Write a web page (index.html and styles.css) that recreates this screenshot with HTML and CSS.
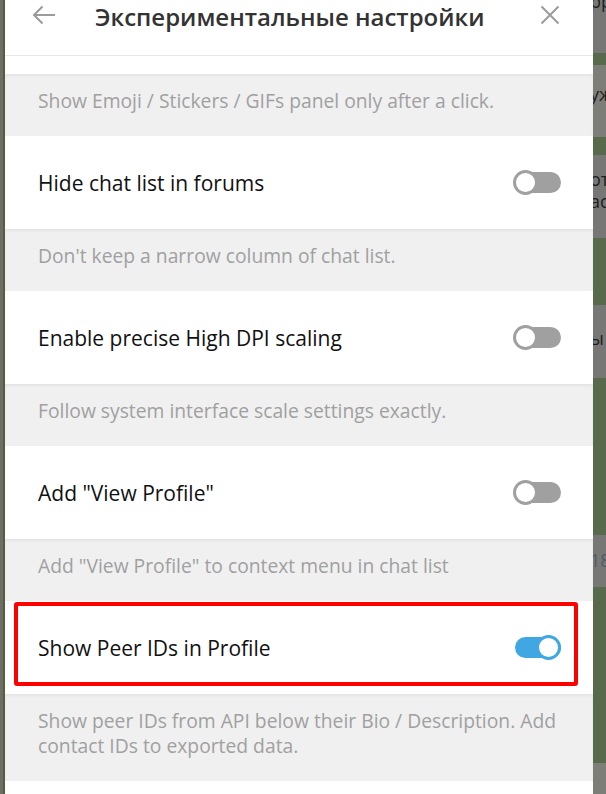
FILE: index.html
```html
<!DOCTYPE html>
<html lang="ru">
<head>
    <meta charset="UTF-8">
    <meta name="viewport" content="width=device-width, initial-scale=1.0">
    <title>Экспериментальные настройки</title>
    <link rel="stylesheet" href="styles.css">
</head>
<body>
    <div class="screen">
        <div class="edge-left"></div>

        <div class="panel">
            <header class="panel-head">
                <svg class="icon-back" width="24" height="20" viewBox="0 0 24 20">
                    <path d="M23 10H2M10.5 1.5L2 10l8.5 8.5" fill="none" stroke="#9b9b9b" stroke-width="2"/>
                </svg>
                <h1 class="title">Экспериментальные настройки</h1>
                <svg class="icon-close" width="20" height="20" viewBox="0 0 20 20">
                    <path d="M1.5 1.5l17 17M18.5 1.5l-17 17" fill="none" stroke="#9b9b9b" stroke-width="2"/>
                </svg>
            </header>
            <div class="spacer"></div>

            <p class="about">Show Emoji / Stickers / GIFs panel only after a click.</p>

            <div class="option">
                <span class="label">Hide chat list in forums</span>
                <span class="toggle"></span>
            </div>
            <p class="about">Don't keep a narrow column of chat list.</p>

            <div class="option">
                <span class="label">Enable precise High DPI scaling</span>
                <span class="toggle"></span>
            </div>
            <p class="about">Follow system interface scale settings exactly.</p>

            <div class="option">
                <span class="label">Add "View Profile"</span>
                <span class="toggle"></span>
            </div>
            <p class="about">Add "View Profile" to context menu in chat list</p>

            <div class="option marked">
                <span class="label">Show Peer IDs in Profile</span>
                <span class="toggle on"></span>
            </div>
            <p class="about">Show peer IDs from API below their Bio / Description. Add contact IDs to exported data.</p>

            <div class="option"></div>
        </div>

        <div class="edge-right">
            <div class="stripe dim" style="height: 53px"><span class="peek top">рр</span></div>
            <div class="stripe" style="height: 12px"></div>
            <div class="stripe dim light" style="height: 72px"><span class="peek" style="padding-top: 18px">уж</span></div>
            <div class="stripe" style="height: 18px"></div>
            <div class="stripe dim" style="height: 83px"><span class="peek" style="padding-top: 13px">от<br>ас</span></div>
            <div class="stripe" style="height: 67px"></div>
            <div class="stripe dim" style="height: 73px"><span class="peek" style="padding-top: 22px">ы</span></div>
            <div class="stripe" style="height: 157px"></div>
            <div class="stripe dim" style="height: 52px"><span class="peek num" style="padding-top: 14px">18</span></div>
            <div class="stripe" style="height: 176px"></div>
            <div class="stripe dim light" style="height: 31px"></div>
        </div>
    </div>
</body>
</html>
```

FILE: styles.css
```css
body {
    margin: 0;
    padding: 0;
    font-family: 'Open Sans', 'Noto Sans', sans-serif;
    background-color: #6d6e69;
    overflow: hidden;
}
.screen {
    display: flex;
    height: 794px;
}
.edge-left {
    width: 3px;
    border-right: 2px solid #565e35;
    background-color: #6d6e69;
}
.panel {
    width: 588px;
    background-color: #ffffff;
    overflow: hidden;
}
.panel-head {
    display: flex;
    align-items: center;
    height: 27px;
    padding: 3px 33px 25px 27px;
    border-bottom: 1px solid #e8e8e8;
}
.icon-back,
.icon-close {
    margin-top: -3px;
}
.title {
    flex: 1;
    margin: 0 0 0 39px;
    font-size: 24px;
    line-height: 27px;
    font-weight: 600;
    color: #333333;
}
.spacer {
    height: 18px;
}
.about {
    margin: 0;
    padding: 14px 20px 23px 33px;
    min-height: 25px;
    background-color: #f0f0f0;
    box-shadow: inset 0 2px 3px rgba(0, 0, 0, 0.05);
    color: #a0a0a0;
    font-size: 19.3px;
    line-height: 25px;
}
.option {
    position: relative;
    display: flex;
    align-items: center;
    justify-content: space-between;
    height: 93px;
    padding: 0 32px 0 33px;
    font-size: 21px;
    color: #111111;
}
.label {
    padding-top: 1px;
}
.toggle {
    position: relative;
    width: 48px;
    height: 25px;
}
.toggle::before {
    content: "";
    position: absolute;
    left: 2px;
    right: 0;
    top: 2px;
    height: 21px;
    border-radius: 11px;
    background-color: #a0a0a0;
}
.toggle::after {
    content: "";
    position: absolute;
    left: 0;
    top: 0;
    width: 19px;
    height: 19px;
    border: 3px solid #a0a0a0;
    border-radius: 50%;
    background-color: #ffffff;
}
.toggle.on::before {
    background-color: #40a7e3;
}
.toggle.on::after {
    left: 23px;
    border-color: #40a7e3;
}
.marked::after {
    content: "";
    position: absolute;
    left: 9px;
    right: 15px;
    top: 1px;
    bottom: 8px;
    border: 4px solid #ff0000;
    border-radius: 3px;
}
.edge-right {
    flex: 1;
    overflow: hidden;
    background-color: #596a4c;
}
.stripe {
    overflow: hidden;
    background-color: #596a4c;
}
.stripe.dim {
    background-color: #777876;
}
.stripe.light {
    background-color: #7d7e78;
}
.peek {
    display: block;
    margin-left: -3px;
    font-size: 18px;
    line-height: 22px;
    color: #1e1e1e;
    white-space: nowrap;
}
.peek.top {
    margin-top: -10px;
}
.peek.num {
    color: #4f5b66;
}
```
